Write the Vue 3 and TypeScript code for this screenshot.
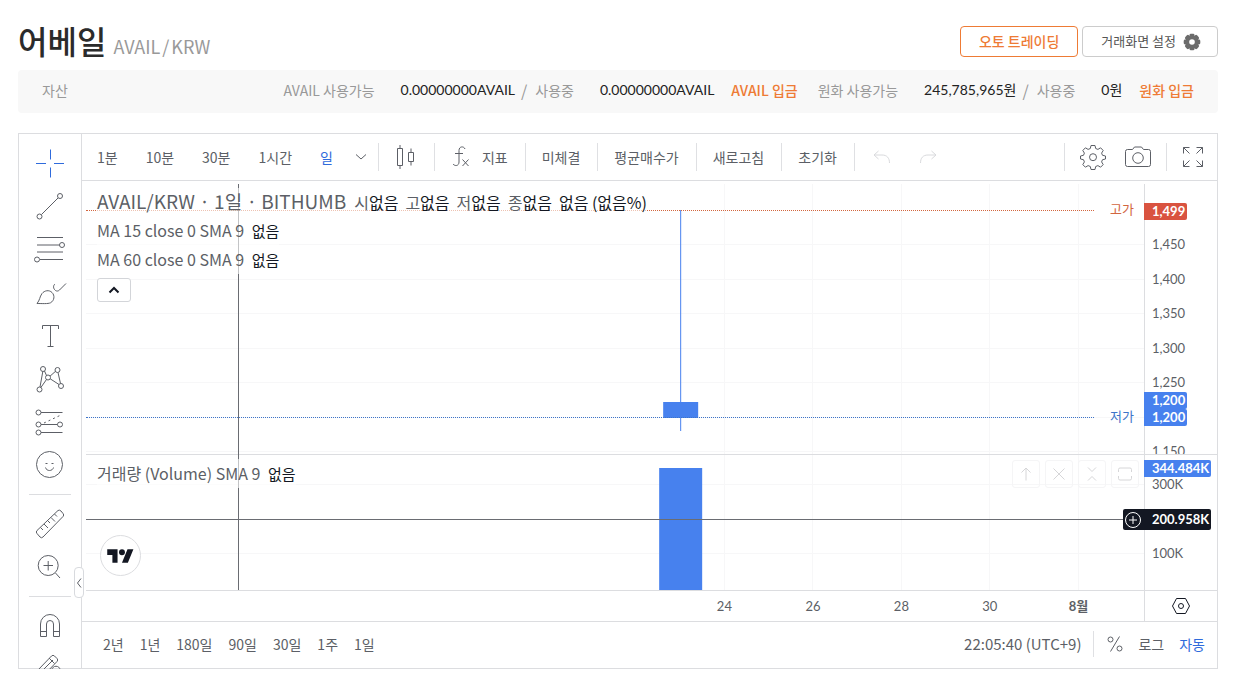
<script setup lang="ts">
interface Shape {
  d?: string
  dots?: string
  circles?: [number, number, number][]
}
interface Tool {
  name: string
  icon: Shape
  active?: boolean
}

const toolGroups: Tool[][] = [
  [
    { name: '십자선', active: true, icon: { d: 'M4 17.5h10M22 17.5h10M18.5 3.5v10M18.5 21.5v10' } },
    { name: '추세선', icon: { d: 'M9.5 25.5L26 9', circles: [[28, 7, 2.5], [7.5, 27.5, 2.5]] } },
    { name: '피보나치', icon: { d: 'M5 5.5h26M5 13h22.5M5 20h26M8 27.5h23', circles: [[30, 13, 2.5], [5, 27.5, 2.5]] } },
    { name: '브러시', icon: { d: 'M5 28.5C8 25 7.500 22 10 18.500C12.500 15.500 17 14.500 20 17.500C23 20.500 22.500 25.500 18.500 27.800C16 29 10 28.500 5 28.500zM23 9c-2 1.500-2 4.500.5 6.500c1.500 1 3 .5 4-.5L34 8.500' } },
    { name: '텍스트', icon: { d: 'M10.500 11V7.500h16V11M18.500 7.500v21.500M15.500 28.500h6' } },
    { name: '패턴', icon: { d: 'M10.800 10.500L8 26M12.500 10L14.500 14.500M18 15.200L23.500 10.300M26 11.500L28.500 22.500M18.200 17.800L27 23.500M14.500 18.500L9 26.300', circles: [[11, 8, 2.5], [25.500, 9, 2.500], [16, 16.500, 2.500], [7.500, 28.500, 2.500], [29, 25, 2.500]] } },
    { name: '예측', icon: { d: 'M9 8.500h21.500M9 20.500h16.500M9 28.500h21.500', dots: 'M12 19L30 10.500', circles: [[6.500, 8.500, 2.500], [6.500, 20.500, 2.500], [28, 20.500, 2.500], [6.500, 28.500, 2.500]] } },
    { name: '이모지', icon: { d: 'M13.500 20.500c1 4 7 4 8 0M13.500 16.500h2M19.500 16.500h2', circles: [[17.500, 17.500, 13]] } },
  ],
  [
    { name: '자', icon: { d: 'M5 24.500L26 4.500q1.500-1 3 .5l2 2.500q1.500 1.500 0 3L11 31q-1.500 1.500-3 0l-3-3.500q-1.500-1.500 0-3zM8.500 21.500l2.500 2.500M12 18l4 4M15.500 14.500l2.500 2.500M19 11.500l4 4M22.500 8l2.500 2.500' } },
    { name: '확대', icon: { d: 'M11.500 16.500h9.500M16.200 12v9.500M23.500 24L28 29', circles: [[16.200, 16.500, 10]] } },
  ],
  [
    { name: '자석', icon: { d: 'M8.500 28.500V16a9.500 9.500 0 0 1 19 0v12.500h-6V16a3.500 3.500 0 0 0-7 0v12.500zM8.500 23.500h6M21.500 23.500h6' } },
    { name: '그리기 모드', icon: { d: 'M6 19L19.500 5q1.500-1.500 3 0l2.500 2.500q1.500 1.500 0 3L12 24M9 21L21 9M17 7l5.500 5.500M20 19c0-5 8-5 8 0' } },
  ],
]

const intervals = ['1분', '10분', '30분', '1시간', '일']
const actions = ['미체결', '평균매수가', '새로고침', '초기화']
const ranges = ['2년', '1년', '180일', '90일', '30일', '1주', '1일']
const quote = [['시', '없음'], ['고', '없음'], ['저', '없음'], ['종', '없음'], ['', '없음 (없음%)']]
const averages = ['MA 15 close 0 SMA 9', 'MA 60 close 0 SMA 9']

const priceTicks = [1450, 1400, 1350, 1300, 1250, 1200, 1150]
const volumeTicks = [300, 100]
const days = [
  { label: '24', index: 1 },
  { label: '26', index: 3 },
  { label: '28', index: 5 },
  { label: '30', index: 7 },
  { label: '8월', index: 9, month: true },
]

const priceY = (price: number) => Math.round(60 + (1450 - price) * 0.69)
const volumeY = (volume: number) => Math.round(29 + (300 - volume) * 0.345)
const dayX = (index: number) => `${(56.16 + index * 4.182).toFixed(2)}%`
const price = (value: number) => value.toLocaleString('en-US')

const candle = { high: 1499, open: 1221, close: 1198, low: 1179, volume: 344.484 }
const cursor = { x: '14.4%', volume: 200.958 }
</script>

<template>
  <main class="page">
    <header class="head">
      <h1>어베일 <small>AVAIL<span>/</span>KRW</small></h1>
      <div class="head-buttons">
        <button class="outline auto">오토 트레이딩</button>
        <button class="outline">
          거래화면 설정
          <svg width="18" height="18" viewBox="0 0 18 18" aria-hidden="true">
            <g fill="#6b6b6b">
              <rect v-for="n in 4" :key="n" x="6.500" y="0.700" width="5" height="16.600" rx="1.400" :transform="`rotate(${n * 45} 9 9)`" />
              <circle cx="9" cy="9" r="6.600" />
            </g>
            <circle cx="9" cy="9" r="2.800" fill="#fff" />
          </svg>
        </button>
      </div>
    </header>

    <section class="assets">
      <span class="assets-title">자산</span>
      <span>AVAIL 사용가능</span><b>0.00000000AVAIL</b>
      <i>/</i><span>사용중</span><b>0.00000000AVAIL</b>
      <a href="#">AVAIL 입금</a>
      <span>원화 사용가능</span><b>245,785,965원</b>
      <i>/</i><span>사용중</span><b>0원</b>
      <a href="#">원화 입금</a>
    </section>

    <section class="widget">
      <nav class="tools">
        <div v-for="(group, g) in toolGroups" :key="g" class="tool-group">
          <button v-for="tool in group" :key="tool.name" :class="{ active: tool.active }" :aria-label="tool.name">
            <svg width="36" height="36" viewBox="0 0 36 36">
              <path v-if="tool.icon.d" :d="tool.icon.d" />
              <path v-if="tool.icon.dots" :d="tool.icon.dots" stroke-dasharray="2 3" />
              <circle v-for="(c, i) in tool.icon.circles" :key="i" :cx="c[0]" :cy="c[1]" :r="c[2]" />
            </svg>
          </button>
        </div>
        <button class="collapse" aria-label="도구 숨기기">
          <svg width="6" height="12" viewBox="0 0 6 12"><path d="M5 1.500L1.500 6L5 10.500" /></svg>
        </button>
      </nav>

      <div class="main">
        <div class="toolbar">
          <div class="intervals">
            <button v-for="item in intervals" :key="item" :class="{ active: item === '일' }">{{ item }}</button>
            <button aria-label="더보기"><svg width="12" height="8" viewBox="0 0 12 8"><path d="M1 1.500L6 6L11 1.500" /></svg></button>
          </div>
          <button class="cell" aria-label="캔들">
            <svg width="22" height="26" viewBox="0 0 22 26"><path d="M2.500 4.500h5v17h-5zM5 1v3.500M5 21.500V25M13.500 8.500h5v9h-5zM16 4.500v4M16 17.500v4" /></svg>
          </button>
          <button class="cell">
            <svg width="20" height="26" viewBox="0 0 20 26"><path d="M14 5c-1-3-6-3-6 1.500V18c0 4-4 4.500-6 2M4 9.500h8M11.500 15.500l6 6.500M17.500 15.500l-6 6.500" /></svg>
            지표
          </button>
          <button v-for="item in actions" :key="item" class="cell">{{ item }}</button>
          <div class="cell history">
            <button aria-label="실행 취소" disabled><svg width="18" height="14" viewBox="0 0 18 14"><path d="M5.500 1L1 5l4.500 4M1 5h8c5 0 7.500 3 7.500 8" /></svg></button>
            <button aria-label="다시 실행" disabled><svg width="18" height="14" viewBox="0 0 18 14"><path d="M12.500 1L17 5l-4.500 4M17 5H9C4 5 1.500 8 1.500 13" /></svg></button>
          </div>
          <div class="toolbar-right">
            <div class="cell pair">
              <button aria-label="설정">
                <svg width="26" height="26" viewBox="0 0 26 26">
                  <path d="M11 1.500h4l.7 3 2.200.9 2.700-1.600 2.600 2.700-1.600 2.600.9 2.200 3 .7v3l-3 .7-.9 2.200 1.600 2.700-2.600 2.600-2.700-1.600-2.200.9-.7 3h-4l-.7-3-2.200-.9-2.700 1.600-2.600-2.600 1.600-2.700-.9-2.200-3-.7v-3l3-.7.9-2.200-1.600-2.600 2.600-2.700 2.700 1.600 2.200-.9z" stroke-linejoin="round" />
                  <circle cx="13" cy="13.200" r="3.500" />
                </svg>
              </button>
              <button aria-label="스냅샷">
                <svg width="28" height="24" viewBox="0 0 28 24"><path d="M3.500 4.500h5l2-2.500h7l2 2.500h5q2 0 2 2v13q0 2-2 2h-21q-2 0-2-2v-13q0-2 2-2z" /><circle cx="14" cy="13" r="5.300" /></svg>
              </button>
            </div>
            <button class="cell" aria-label="전체화면">
              <svg width="22" height="22" viewBox="0 0 22 22"><path d="M1.500 7.500v-6h6M1.500 1.500l6 6M14.500 1.500h6v6M20.500 1.500l-6 6M1.500 14.500v6h6M1.500 20.500l6-6M20.500 14.500v6h-6M20.500 20.500l-6-6" /></svg>
            </button>
          </div>
        </div>

        <div class="chart">
          <div class="pane price">
            <svg class="plot" width="100%" height="270">
              <line v-for="tick in priceTicks" :key="tick" class="grid" x1="0" x2="100%" :y1="priceY(tick)" :y2="priceY(tick)" />
              <line v-for="day in days" :key="day.label" class="grid" :x1="dayX(day.index)" :x2="dayX(day.index)" y1="0" y2="100%" />
              <rect class="bar" :x="dayX(0)" :y="priceY(candle.high)" width="1" :height="priceY(candle.low) - priceY(candle.high)" />
              <rect class="bar" :x="dayX(0)" :y="priceY(candle.open)" width="35" :height="priceY(candle.close) - priceY(candle.open)" transform="translate(-17)" />
            </svg>
            <div class="level high" :style="{ top: `${priceY(1499) - 10}px` }"><span class="dots"></span><span>고가</span></div>
            <div class="level low" :style="{ top: `${priceY(1200) - 10}px` }"><span class="dots"></span><span>저가</span></div>
          </div>
          <div class="scale price-scale">
            <span v-for="tick in priceTicks" :key="tick" class="tick" :style="{ top: `${priceY(tick) - 10}px` }">{{ price(tick) }}</span>
          </div>

          <div class="pane volume">
            <svg class="plot" width="100%" height="135">
              <line v-for="tick in volumeTicks" :key="tick" class="grid" x1="0" x2="100%" :y1="volumeY(tick)" :y2="volumeY(tick)" />
              <line v-for="day in days" :key="day.label" class="grid" :x1="dayX(day.index)" :x2="dayX(day.index)" y1="0" y2="100%" />
              <rect class="bar" :x="dayX(0)" :y="volumeY(candle.volume) - 1" width="43" height="135" transform="translate(-21)" />
            </svg>
            <div class="cursor-y" :style="{ top: `${volumeY(cursor.volume) + 1}px` }"></div>
            <div class="legend"><div class="legend-row">거래량 (Volume) SMA 9 <em>없음</em></div></div>
            <div class="pane-buttons">
              <button aria-label="위로"><svg width="16" height="16" viewBox="0 0 16 16"><path d="M8 14.500V2M3.500 6.500L8 2l4.500 4.500" /></svg></button>
              <button aria-label="삭제"><svg width="16" height="16" viewBox="0 0 16 16"><path d="M2.500 2.500l11 11M13.500 2.500l-11 11" /></svg></button>
              <button aria-label="접기"><svg width="16" height="16" viewBox="0 0 16 16"><path d="M4 1.500l4 4 4-4M4 14.500l4-4 4 4" /></svg></button>
              <button aria-label="최대화"><svg width="16" height="16" viewBox="0 0 16 16"><path d="M1.500 6V3.500q0-1.500 1.500-1.500h10q1.500 0 1.500 1.500V6M1.500 10v2.500q0 1.500 1.500 1.500h10q1.500 0 1.500-1.500V10" /></svg></button>
            </div>
            <a class="logo" href="#" aria-label="TradingView">
              <svg width="27" height="14" viewBox="0 0 36 19"><path d="M14 18.500H7V8H0V.5h14zM28 18.500h-8L27.500.5h8z" /><circle cx="20" cy="4.500" r="4" /></svg>
            </a>
          </div>
          <div class="scale volume-scale">
            <span v-for="tick in volumeTicks" :key="tick" class="tick" :style="{ top: `${volumeY(tick) - 10}px` }">{{ tick }}K</span>
            <span class="tag" :style="{ top: `${volumeY(candle.volume) - 9}px` }">344.484K</span>
            <span class="tag cursor-tag" :style="{ top: `${volumeY(cursor.volume) - 9}px` }">
              <svg width="18" height="18" viewBox="0 0 18 18"><circle cx="9" cy="9" r="7.500" /><path d="M5 9h8M9 5v8" /></svg>
              200.958K
            </span>
          </div>

          <div class="times">
            <span v-for="day in days" :key="day.label" :class="{ month: day.month }" :style="{ left: dayX(day.index) }">{{ day.label }}</span>
          </div>
          <button class="scale corner" aria-label="축 설정">
            <svg width="20" height="18" viewBox="0 0 20 18"><path d="M5.500 1.500h9L18.500 9l-4 7.500h-9L1.500 9z" /><circle cx="10" cy="9" r="2.500" /></svg>
          </button>

          <div class="cursor-area"><div class="cursor-x" :style="{ left: cursor.x }"></div></div>
          <div class="price-overlay">
            <div class="legend">
              <div class="legend-title">
                <strong>AVAIL/KRW · 1일 · BITHUMB</strong>
                <span v-for="(item, i) in quote" :key="i">{{ item[0] }}<em>{{ item[1] }}</em></span>
              </div>
              <div v-for="item in averages" :key="item" class="legend-row">{{ item }} <em>없음</em></div>
              <button class="fold" aria-label="접기"><svg width="12" height="8" viewBox="0 0 12 8"><path d="M1.500 6.500L6 2l4.500 4.500" /></svg></button>
            </div>
            <div class="price-tags">
              <span class="tag red" :style="{ top: `${priceY(1499) - 7}px` }">1,499</span>
              <span class="tag" :style="{ top: `${priceY(1200) - 25}px` }">1,200</span>
              <span class="tag" :style="{ top: `${priceY(1200) - 8}px` }">1,200</span>
            </div>
          </div>
        </div>

        <footer class="bottom">
          <button v-for="item in ranges" :key="item">{{ item }}</button>
          <button class="clock">22:05:40 (UTC+9)</button>
          <div class="modes">
            <button aria-label="퍼센트"><svg width="16" height="18" viewBox="0 0 16 18"><path d="M12.500 1.500l-9 15" /><circle cx="3.500" cy="4.500" r="2.500" /><circle cx="12.500" cy="13.500" r="2.500" /></svg></button>
            <button>로그</button>
            <button class="active">자동</button>
          </div>
        </footer>
      </div>
    </section>
  </main>
</template>

<style>
body {
  margin: 0;
  background: #fff;
}
</style>

<style scoped>
.page {
  padding: 18px 21px 17px 18px;
  font: 14px/20px "Noto Sans CJK KR", "Noto Sans", sans-serif;
  color: #5c5f66;
}
button {
  display: flex;
  align-items: center;
  padding: 0;
  border: 0;
  background: none;
  font: inherit;
  color: inherit;
  white-space: nowrap;
}
a {
  text-decoration: none;
}
em {
  font-style: normal;
  color: #131722;
}
svg {
  display: block;
  flex: none;
  fill: none;
  stroke: currentColor;
}
.head {
  display: flex;
  justify-content: space-between;
  height: 52px;
}
h1 {
  margin: 0;
  font-size: 32px;
  line-height: 44px;
  font-weight: 500;
  color: #2b2b2b;
}
h1 small {
  font-size: 18px;
  font-weight: 400;
  color: #999;
}
h1 small span {
  margin: 0 2px;
}
.head-buttons {
  display: flex;
  gap: 4px;
  padding-top: 8px;
}
.outline {
  gap: 7px;
  height: 31px;
  padding: 0 16px 2px 18px;
  border: 1px solid #ccc;
  border-radius: 4px;
  background: #fff;
  font-size: 13px;
  color: #555;
  box-sizing: border-box;
}
.outline svg {
  margin-top: 2px;
  stroke: none;
}
.auto {
  padding-right: 18px;
  border-color: #ee7b35;
  font-size: 14px;
  font-weight: 500;
  color: #ee7b35;
}
.assets {
  display: flex;
  align-items: center;
  height: 43px;
  padding: 0 24px 3px;
  border-radius: 4px;
  background: #f8f8f8;
  color: #999;
  white-space: nowrap;
  box-sizing: border-box;
}
.assets-title {
  margin-right: auto;
}
.assets i {
  margin: 0 8px 0 6px;
  font-size: 16px;
  font-style: normal;
}
.assets b {
  margin-left: 26px;
  font-family: Lato, "Noto Sans CJK KR", sans-serif;
  font-weight: 400;
  color: #222;
}
.assets a {
  margin: 0 20px 0 17px;
  font-weight: 500;
  color: #ee7b35;
}
.assets a:last-child {
  margin-right: 0;
}
.widget {
  display: flex;
  margin-top: 20px;
  border: 1px solid #dcdde0;
}
.tools {
  position: relative;
  flex: none;
  width: 62px;
  height: 526px;
  padding-top: 8px;
  border-right: 1px solid #dcdde0;
}
.tool-group {
  padding-bottom: 8px;
}
.tool-group + .tool-group {
  padding-top: 8px;
}
.tool-group + .tool-group::before {
  content: "";
  display: block;
  height: 1px;
  margin: -8px 10px 7px;
  background: #dcdde0;
}
.tool-group:last-of-type {
  height: 57px;
  overflow: hidden;
}
.tool-group button {
  justify-content: center;
  width: 100%;
  height: 43px;
}
.tools .active,
.active {
  color: #2f6bdc;
}
.collapse {
  position: absolute;
  right: -3px;
  bottom: 70px;
  justify-content: center;
  width: 10px;
  height: 31px;
  border: 1px solid #d8dade;
  border-radius: 4px;
  background: #fff;
  box-sizing: border-box;
  z-index: 3;
}
.main {
  flex: 1;
  min-width: 0;
}
.toolbar {
  display: flex;
  align-items: center;
  height: 46px;
  border-bottom: 1px solid #dcdde0;
}
.intervals {
  display: flex;
  gap: 28px;
  padding: 0 11px 0 15px;
}
.intervals button:last-child {
  margin-left: -6px;
}
.cell {
  display: flex;
  gap: 11px;
  height: 28px;
  padding: 0 17px 0 16px;
  border-left: 1px solid #dfe0e3;
}
.history {
  gap: 28px;
  padding: 0 18px;
  color: #d9dadd;
}
.toolbar-right {
  display: flex;
  margin-left: auto;
}
.toolbar-right .cell {
  padding: 0 13px 0 15px;
}
.toolbar-right .pair {
  gap: 18px;
  padding-right: 14px;
}
.chart {
  display: grid;
  grid-template-columns: 1fr 73px;
  position: relative;
  padding: 3px 0 0 4px;
  border-bottom: 1px solid #dcdde0;
}
.pane {
  position: relative;
  min-width: 0;
  border-bottom: 1px solid #dcdde0;
}
.grid {
  stroke: #f7f7f8;
  shape-rendering: crispEdges;
}
.bar {
  fill: #4781ee;
  stroke: none;
}
.volume {
  height: 135px;
}
.level {
  display: flex;
  gap: 16px;
  position: absolute;
  left: 0;
  right: 10px;
  font-size: 13px;
  line-height: 17px;
  color: #d2663f;
}
.level.low {
  color: #3d74c9;
}
.dots {
  flex: 1;
  height: 10px;
  border-bottom: 1px dotted;
}
.legend {
  position: absolute;
  top: 4px;
  left: 11px;
  white-space: nowrap;
  z-index: 2;
}
.legend-title,
.legend-row {
  background: rgba(255, 255, 255, 0.6);
}
.legend-title {
  display: flex;
  align-items: baseline;
  gap: 7px;
  height: 28px;
  font-size: 16px;
  line-height: 28px;
}
.legend-title strong {
  margin-right: 1px;
  font-size: 19px;
  font-weight: 400;
  text-rendering: geometricPrecision;
}
.legend-row {
  width: max-content;
  font-size: 16px;
  line-height: 29px;
}
.legend-row em {
  margin-left: 4px;
  font-size: 15px;
}
.fold {
  justify-content: center;
  width: 34px;
  height: 24px;
  margin-top: 4px;
  border: 1px solid #d3d5d9;
  border-radius: 3px;
  background: #fff;
  color: #131722;
  box-sizing: border-box;
}
.fold svg {
  stroke-width: 2;
}
.scale {
  position: relative;
  border-bottom: 1px solid #dcdde0;
  border-left: 1px solid #dcdde0;
  font: 13px/20px Lato, sans-serif;
}
.price-scale {
  overflow: hidden;
}
.tick {
  position: absolute;
  left: 7px;
}
.price-overlay {
  position: absolute;
  top: 3px;
  left: 4px;
  right: 0;
}
.price-tags {
  position: absolute;
  top: 0;
  right: 0;
  width: 72px;
  font: 13px/20px Lato, sans-serif;
}
.tag {
  display: flex;
  position: absolute;
  left: -1px;
  padding: 0 2px 0 8px;
  border-radius: 0 2px 2px 0;
  background: #4781ee;
  line-height: 17px;
  font-weight: 700;
  color: #fff;
}
.red {
  background: #d95340;
}
.cursor-tag {
  gap: 10px;
  left: -22px;
  padding-left: 1px;
  border-radius: 2px;
  background: #131722;
  line-height: 21px;
  align-items: center;
  z-index: 3;
}
.cursor-area {
  position: absolute;
  top: 3px;
  bottom: 31px;
  left: 4px;
  right: 73px;
  pointer-events: none;
}
.cursor-x {
  position: absolute;
  top: 0;
  bottom: 0;
  width: 1px;
  background: #6a6c72;
}
.cursor-y {
  position: absolute;
  left: 0;
  right: 0;
  height: 1px;
  background: #6a6c72;
}
.pane-buttons {
  display: flex;
  gap: 5px;
  position: absolute;
  top: 5px;
  right: 5px;
  color: #d6d6d8;
}
.pane-buttons button {
  justify-content: center;
  width: 28px;
  height: 28px;
  border: 1px solid #f5f5f6;
  border-radius: 3px;
  box-sizing: border-box;
}
.logo {
  display: flex;
  align-items: center;
  justify-content: center;
  position: absolute;
  left: 14px;
  bottom: 14px;
  width: 41px;
  height: 41px;
  border: 1px solid #dcdde0;
  border-radius: 50%;
  background: #fff;
  box-sizing: border-box;
}
.logo svg {
  fill: #131722;
  stroke: none;
}
.times {
  position: relative;
  height: 30px;
  font: 13px/30px Lato, "Noto Sans CJK KR", sans-serif;
}
.times span {
  position: absolute;
  transform: translateX(-50%);
}
.month {
  font-weight: 700;
}
.corner {
  justify-content: center;
  border-bottom: 0;
  color: #131722;
}
.bottom {
  display: flex;
  align-items: center;
  gap: 16px;
  height: 46px;
  padding: 0 12px 2px 21px;
  box-sizing: border-box;
}
.clock {
  margin-left: auto;
  font-size: 15px;
}
.modes {
  display: flex;
  gap: 15px;
  height: 26px;
  margin-left: -4px;
  padding-left: 13px;
  border-left: 1px solid #dfe0e3;
}
</style>
